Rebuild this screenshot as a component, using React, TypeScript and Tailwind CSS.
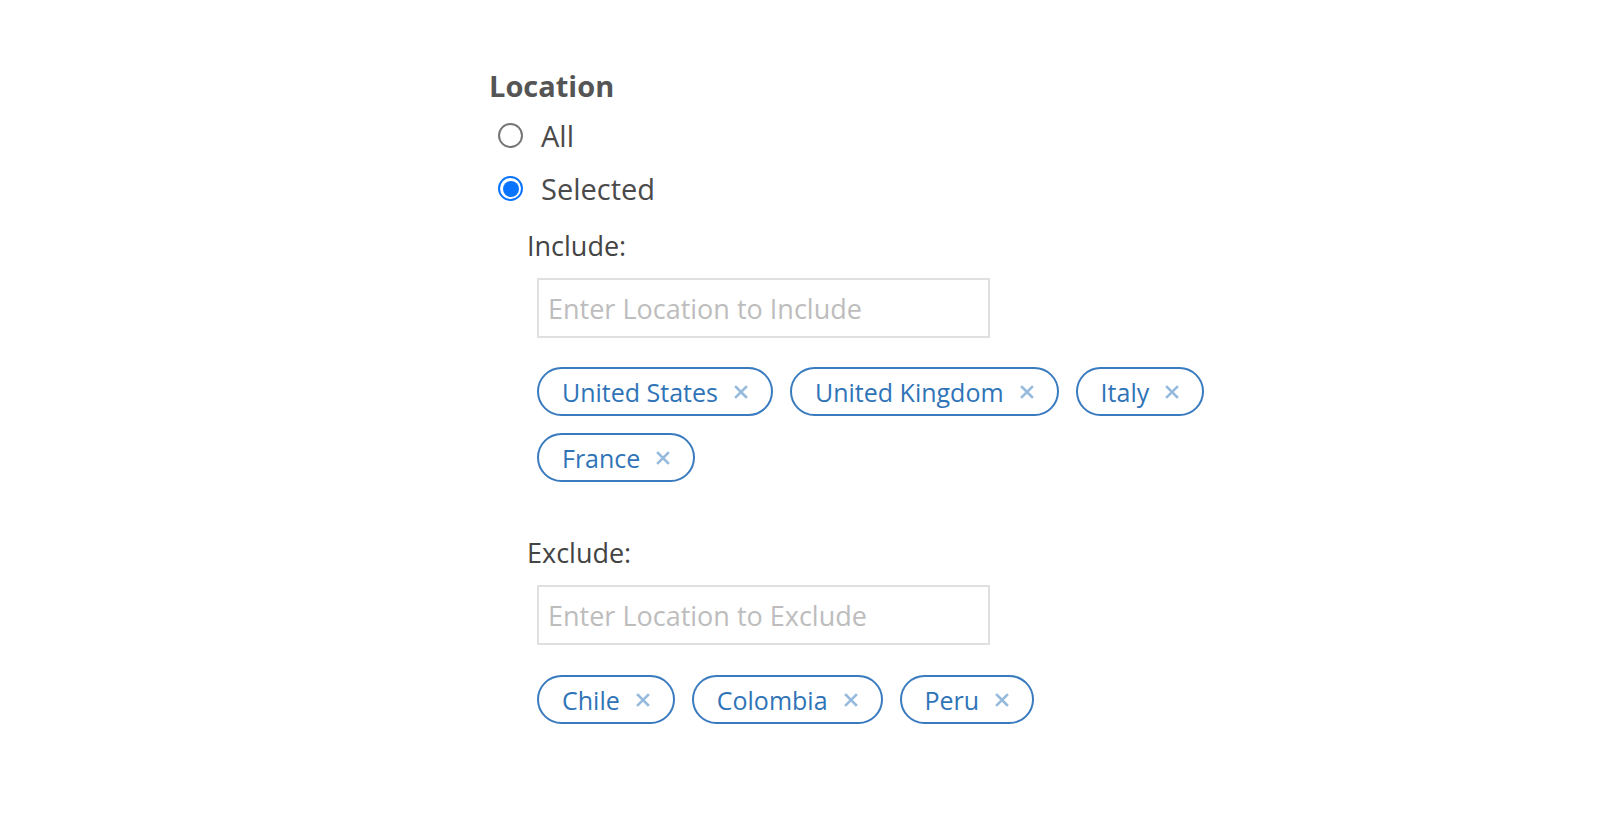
import { useState } from "react";

const font = { fontFamily: '"Open Sans", "Noto Sans", sans-serif' };

function Radio({ checked, label, onClick }: { checked: boolean; label: string; onClick: () => void }) {
  return (
    <button onClick={onClick} className="flex items-center h-[53px] pl-[9px] text-left">
      {checked ? (
        <span className="w-[25px] h-[25px] rounded-full border-[2px] border-[#0b74ff] flex items-center justify-center">
          <span className="w-[16px] h-[16px] rounded-full bg-[#0b74ff]" />
        </span>
      ) : (
        <span className="w-[25px] h-[25px] rounded-full border-[2px] border-[#767676]" />
      )}
      <span className="ml-[18px] text-[29px] leading-[36px] text-[#4a4a4a]">{label}</span>
    </button>
  );
}

function Chip({ label, onRemove }: { label: string; onRemove: () => void }) {
  return (
    <div className="flex items-center h-[49px] pl-[23px] pr-[23px] rounded-full border-[2px] border-[#3a7bbf]">
      <span className="text-[25px] leading-[32px] text-[#2f74b7]">{label}</span>
      <button onClick={onRemove} className="ml-[16px] flex items-center">
        <svg width="14" height="14" viewBox="0 0 14 14">
          <path d="M2 2 L12 12 M12 2 L2 12" stroke="#97bbdc" strokeWidth="2.6" strokeLinecap="square" />
        </svg>
      </button>
    </div>
  );
}

function LocationGroup({ label, placeholder, items, setItems, chipsTop }: {
  label: string; placeholder: string; items: string[]; setItems: (v: string[]) => void; chipsTop: string;
}) {
  const [value, setValue] = useState("");
  return (
    <div>
      <div className="ml-[38px] text-[27px] leading-[36px] text-[#444]">{label}</div>
      <input
        value={value}
        onChange={(e) => setValue(e.target.value)}
        onKeyDown={(e) => {
          if (e.key === "Enter" && value.trim()) { setItems([...items, value.trim()]); setValue(""); }
        }}
        placeholder={placeholder}
        className="block mt-[14px] ml-[48px] w-[453px] h-[60px] border-[2px] border-[#e0e0e0] px-[9px] text-[27px] text-[#444] placeholder:text-[#bdbdbd] outline-none"
        style={font}
      />
      <div className={`ml-[48px] w-[690px] flex flex-wrap gap-[17px] ${chipsTop}`}>
        {items.map((c) => (
          <Chip key={c} label={c} onRemove={() => setItems(items.filter((x) => x !== c))} />
        ))}
      </div>
    </div>
  );
}

export default function App() {
  const [mode, setMode] = useState<"all" | "selected">("selected");
  const [include, setInclude] = useState(["United States", "United Kingdom", "Italy", "France"]);
  const [exclude, setExclude] = useState(["Chile", "Colombia", "Peru"]);

  return (
    <div className="min-h-screen bg-white" style={font}>
      <div className="pl-[489px] pt-[68px]">
        <h2 className="text-[29px] leading-[36px] font-bold text-[#555]">Location</h2>
        <div className="mt-[5px] flex flex-col">
          <Radio checked={mode === "all"} label="All" onClick={() => setMode("all")} />
          <Radio checked={mode === "selected"} label="Selected" onClick={() => setMode("selected")} />
        </div>
        <div className="mt-[13px]">
          <LocationGroup label="Include:" placeholder="Enter Location to Include" items={include} setItems={setInclude} chipsTop="mt-[29px]" />
        </div>
        <div className="mt-[53px]">
          <LocationGroup label="Exclude:" placeholder="Enter Location to Exclude" items={exclude} setItems={setExclude} chipsTop="mt-[30px]" />
        </div>
      </div>
    </div>
  );
}
